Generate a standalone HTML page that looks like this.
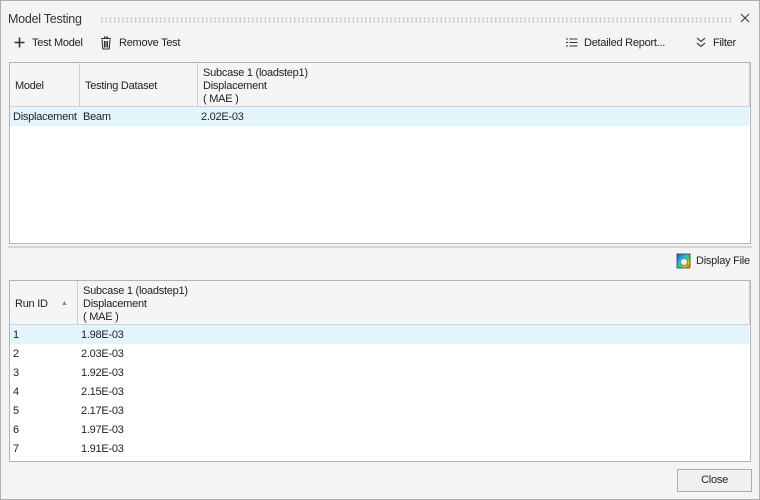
<!DOCTYPE html>
<html><head><meta charset="utf-8"><style>
*{box-sizing:border-box;margin:0;padding:0}
body{width:760px;height:500px;background:#f4f4f4;font-family:"Liberation Sans",sans-serif;font-size:11px;letter-spacing:-0.25px;color:#222;position:relative;overflow:hidden}
.frame{position:absolute;left:0;top:0;width:760px;height:500px;border:1px solid #b0b0b0}
.abs{position:absolute;white-space:nowrap}
.tbl{position:absolute;left:9px;width:742px;background:#fff;border:1px solid #b4b4b4}
.hdr{position:absolute;left:0;top:0;right:0;height:44px;background:#f5f5f5;border-bottom:1px solid #d0d0d0}
.vl{position:absolute;top:0;height:44px;width:1px;background:#d0d0d0}
.sel{position:absolute;left:0;right:0;height:19px;background:#e3f5fc}
.t{position:absolute;white-space:nowrap;line-height:12.5px}
</style></head><body>
<div class="frame"></div>
<div class="abs" style="left:8px;top:12px;font-size:12.5px;color:#333">Model Testing</div>
<div class="abs" style="left:100px;top:17px;width:633px;height:6px;background-image:radial-gradient(circle,#b8b8b8 0.8px,transparent 1px);background-size:4.2px 3px"></div>
<svg class="abs" style="left:740px;top:13px" width="10" height="10"><path d="M1 1l8 8M9 1l-8 8" stroke="#444" stroke-width="1.2"/></svg>

<svg class="abs" style="left:14px;top:37px" width="11" height="11"><path d="M5.5 0.5v10M0.5 5.5h10" stroke="#333" stroke-width="1.6"/></svg>
<div class="abs" style="left:32px;top:37px">Test Model</div>
<svg class="abs" style="left:100px;top:36px" width="12" height="14" viewBox="0 0 12 14"><path d="M1 2.5h10M4.5 2.5V1h3v1.5M2 3.5l.8 9.5h6.4l.8-9.5M4.5 5v6.5M6 5v6.5M7.5 5v6.5" stroke="#333" stroke-width="1.1" fill="none"/></svg>
<div class="abs" style="left:119px;top:37px">Remove Test</div>
<svg class="abs" style="left:566px;top:38px" width="12" height="9"><path d="M0 1h2M0 4.5h2M0 8h2M3.5 1h8M3.5 4.5h8M3.5 8h8" stroke="#333" stroke-width="1"/></svg>
<div class="abs" style="left:584px;top:37px">Detailed Report...</div>
<svg class="abs" style="left:696px;top:37px" width="10" height="11"><path d="M1 1l4 3.5L9 1M1 6l4 3.5L9 6" stroke="#444" stroke-width="1.2" fill="none"/></svg>
<div class="abs" style="left:713px;top:37px">Filter</div>

<div class="tbl" style="top:62px;height:182px">
 <div class="hdr"></div>
 <div class="vl" style="left:69px"></div><div class="vl" style="left:187px"></div>
 <div class="vl" style="left:739px"></div>
 <div class="t" style="left:5px;top:17px">Model</div>
 <div class="t" style="left:75px;top:17px">Testing Dataset</div>
 <div class="t" style="left:193px;top:4px;line-height:13px">Subcase 1 (loadstep1)<br>Displacement<br>( MAE )</div>
 <div class="sel" style="top:44px;right:1px"></div>
 <div class="t" style="left:3px;top:48px">Displacement</div>
 <div class="t" style="left:73px;top:48px">Beam</div>
 <div class="t" style="left:191px;top:48px">2.02E-03</div>
</div>
<div class="abs" style="left:8px;top:246px;width:744px;height:2px;background:#d4d4d4"></div>

<svg class="abs" style="left:676px;top:253px" width="17" height="17" viewBox="0 0 17 17"><defs><linearGradient id="g" x1="0" y1="0" x2="1" y2="1"><stop offset="0" stop-color="#2050e0"/><stop offset=".4" stop-color="#20c0e0"/><stop offset=".6" stop-color="#40d040"/><stop offset=".8" stop-color="#f0d020"/><stop offset="1" stop-color="#e02020"/></linearGradient></defs><rect x="1" y="1" width="13" height="14" fill="url(#g)" stroke="#335" stroke-width=".8"/><circle cx="8" cy="9" r="3.5" fill="#eee" stroke="#888"/><path d="M11 12l3 3" stroke="#c80" stroke-width="2"/></svg>
<div class="abs" style="left:696px;top:255px">Display File</div>

<div class="tbl" style="top:280px;height:182px">
 <div class="hdr"></div>
 <div class="vl" style="left:67px"></div><div class="vl" style="left:739px"></div>
 <div class="t" style="left:5px;top:17px">Run ID</div>
 <div class="t" style="left:51px;top:17px;font-size:7px;color:#888">▲</div>
 <div class="t" style="left:73px;top:4px;line-height:13px">Subcase 1 (loadstep1)<br>Displacement<br>( MAE )</div>
 <div class="sel" style="top:44px;right:1px"></div>
 <div class="t" style="left:3px;top:48px">1</div><div class="t" style="left:71px;top:48px">1.98E-03</div>
 <div class="t" style="left:3px;top:67px">2</div><div class="t" style="left:71px;top:67px">2.03E-03</div>
 <div class="t" style="left:3px;top:86px">3</div><div class="t" style="left:71px;top:86px">1.92E-03</div>
 <div class="t" style="left:3px;top:105px">4</div><div class="t" style="left:71px;top:105px">2.15E-03</div>
 <div class="t" style="left:3px;top:124px">5</div><div class="t" style="left:71px;top:124px">2.17E-03</div>
 <div class="t" style="left:3px;top:143px">6</div><div class="t" style="left:71px;top:143px">1.97E-03</div>
 <div class="t" style="left:3px;top:162px">7</div><div class="t" style="left:71px;top:162px">1.91E-03</div>
</div>

<div class="abs" style="left:677px;top:469px;width:75px;height:23px;border:1px solid #adadad;background:#f0f0f0;text-align:center;line-height:21px">Close</div>
</body></html>
